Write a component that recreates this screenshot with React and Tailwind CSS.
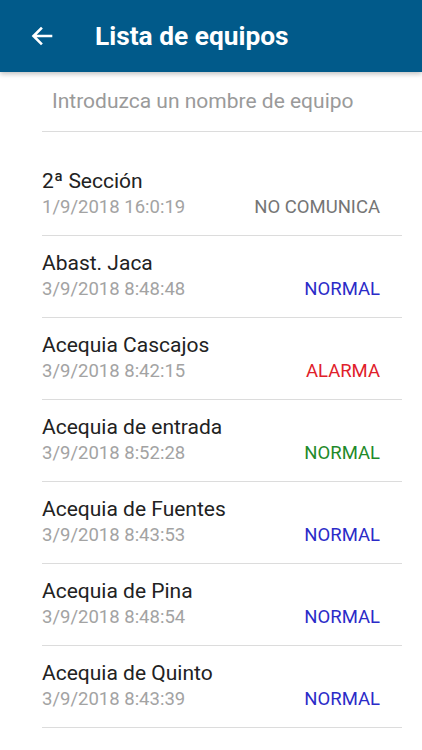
const equipos = [
  { name: '2ª Sección', date: '1/9/2018 16:0:19', status: 'NO COMUNICA', color: 'text-[#757575]' },
  { name: 'Abast. Jaca', date: '3/9/2018 8:48:48', status: 'NORMAL', color: 'text-[#2b2bc8]' },
  { name: 'Acequia Cascajos', date: '3/9/2018 8:42:15', status: 'ALARMA', color: 'text-[#e0202a]' },
  { name: 'Acequia de entrada', date: '3/9/2018 8:52:28', status: 'NORMAL', color: 'text-[#1f8a2a]' },
  { name: 'Acequia de Fuentes', date: '3/9/2018 8:43:53', status: 'NORMAL', color: 'text-[#2b2bc8]' },
  { name: 'Acequia de Pina', date: '3/9/2018 8:48:54', status: 'NORMAL', color: 'text-[#2b2bc8]' },
  { name: 'Acequia de Quinto', date: '3/9/2018 8:43:39', status: 'NORMAL', color: 'text-[#2b2bc8]' },
];

export default function App() {
  return (
    <div className="w-[422px] h-[750px] overflow-hidden bg-white font-['Roboto',sans-serif]">
      {/* Toolbar */}
      <div className="relative z-10 h-[72px] bg-[#015a8a] flex items-center shadow-[0_2px_5px_rgba(0,0,0,0.25)]">
        <svg className="ml-[30px] w-[24px] h-[24px]" viewBox="0 0 24 24" fill="none" stroke="white" strokeWidth="2.6" strokeLinecap="square">
          <path d="M21 12H4M11 4.5L3.5 12L11 19.5" />
        </svg>
        <h1 className="ml-[41px] text-white text-[26.3px] font-bold leading-none">Lista de equipos</h1>
      </div>

      {/* Search */}
      <div className="ml-[42px] h-[60px] border-b border-[#dcdcdc] flex items-center">
        <span className="ml-[10px] mt-[1px] text-[21px] text-[#9a9a9a]">Introduzca un nombre de equipo</span>
      </div>

      {/* List */}
      <div className="mt-[22px] ml-[42px] w-[360px]">
        {equipos.map((e) => (
          <div key={e.name} className="h-[82px] border-b border-[#dcdcdc] pt-[14px] pr-[22px]">
            <p className="text-[21px] leading-[26px] text-[#222]">{e.name}</p>
            <div className="flex justify-between items-center leading-[26px]">
              <span className="text-[18.5px] text-[#a3a3a3]">{e.date}</span>
              <span className={`text-[18.5px] ${e.color}`}>{e.status}</span>
            </div>
          </div>
        ))}
      </div>
    </div>
  );
}
